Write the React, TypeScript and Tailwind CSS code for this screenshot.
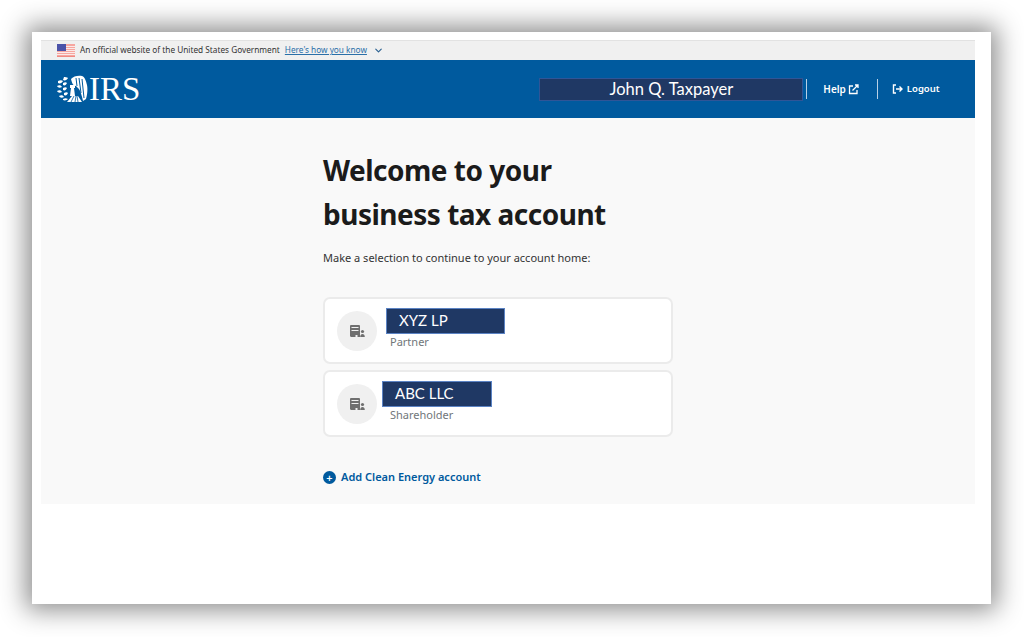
import { ChevronDown } from 'lucide-react';

// small US flag drawn by hand, the gov banner uses one
function Flag() {
  return (
    <svg width="18" height="13" viewBox="0 0 18 13" className="shrink-0">
      <rect width="18" height="13" fill="#f6a6a0" />
      <rect y="2" width="18" height="1" fill="#fbe9e7" />
      <rect y="4" width="18" height="1" fill="#fbe9e7" />
      <rect y="6" width="18" height="1" fill="#fbe9e7" />
      <rect y="8" width="18" height="1" fill="#fbe9e7" />
      <rect y="10" width="18" height="1" fill="#fbe9e7" />
      <rect y="12" width="18" height="1" fill="#f08a82" />
      <rect width="9" height="7" fill="#4a52a8" />
    </svg>
  );
}

function Emblem() {
  return (
    <svg width="31" height="28" viewBox="0 0 31 28" className="shrink-0" fill="#fff">
      {/* laurel */}
      <path d="M1 6c2-1 4-1 5 0-1 2-3 3-5 2zM0 11c2-1 4-1 5 1-2 1-4 1-5-1zM0 16c2-1 4-1 5 1-2 1-4 1-5-1zM2 21c2-1 4-1 5 1-2 1-4 1-5-1z" />
      <path d="M7 2c1 0 3 0 4 1-1 2-3 3-5 2zM6 8c2-1 3-1 4 0-1 2-2 3-4 2zM6 13c2-1 3-1 4 0-1 2-2 3-4 2zM7 18c2-1 3-1 4 0-1 2-2 3-4 2zM6 24c2-1 3-1 5 0-1 1-3 2-5 1z" />
      {/* eagle */}
      <path d="M14 4c2-3 8-4 11-3 3 1 4 5 5 9 1 5 0 11-1 14l-3 2c-1-4-2-9-4-12l-3-3c-3 0-4-3-5-7z" />
      <path d="M19 3l1 8M22 3l2 15M25 4l2 19" stroke="#005a9e" strokeWidth="1" fill="none" />
      {/* shield */}
      <path d="M13 10h5v3h-1l1 8h-5l1-8h-1z" />
      {/* base */}
      <path d="M10 27l5-6h6l4 6z" />
      <path d="M14 27l3-6M18 27l1-6M21 27l-1-6" stroke="#005a9e" strokeWidth=".8" fill="none" />
    </svg>
  );
}

function BuildingUser() {
  return (
    <svg width="15" height="12" viewBox="0 0 15 12" fill="#6f6f6f">
      <path d="M0 1.200C0 .5.500 0 1.200 0h7.600C9.500 0 10 .5 10 1.200V12H7.500v-2h-2v2H1.200C.5 12 0 11.500 0 10.800z" />
      <rect x="1.500" y="2" width="7" height="1" fill="#f0f0f0" />
      <rect x="1.500" y="5" width="7" height="1" fill="#f0f0f0" />
      <circle cx="12.500" cy="6.500" r="1.600" />
      <path d="M10.200 12c0-2 1-3 2.300-3s2.300 1 2.300 3z" />
    </svg>
  );
}

function AccountCard({ name, role, boxClass }: { name: string; role: string; boxClass: string }) {
  return (
    <div className="flex h-[67px] w-[350px] items-center rounded-[7px] border-2 border-[#ebebeb] bg-white pl-[12px]">
      <div className="flex h-[40px] w-[40px] shrink-0 items-center justify-center rounded-full bg-[#f0f0f0]">
        <BuildingUser />
      </div>
      <div className="flex flex-col pb-[4px]">
        <div className={`flex h-[26px] items-center border border-[#5b83c4] bg-[#1f3864] font-['Lato',sans-serif] text-[15px] text-white ${boxClass}`}>
          {name}
        </div>
        <div className="ml-[13px] text-[11px] leading-[16px] text-[#71767a]">{role}</div>
      </div>
    </div>
  );
}

export default function App() {
  return (
    <div className="h-[637px] w-[1024px] overflow-hidden bg-white pl-[32px] pt-[32px] font-['Noto_Sans',sans-serif]">
      <div className="h-[572px] w-[959px] bg-white pl-[9px] pr-[16px] pt-[8px] shadow-[0_0_24px_6px_rgba(0,0,0,0.45)]">
        <div className="flex h-[20px] items-center border-t border-[#e2e2e2] bg-[#f0f0f0] pl-[16px] text-[8.250px] text-[#333]">
          <Flag />
          <span className="ml-[5px] whitespace-nowrap">An official website of the United States Government</span>
          <span className="ml-[5px] whitespace-nowrap text-[#2a6fa8] underline">Here's how you know</span>
          <ChevronDown size={11} strokeWidth={2.5} className="ml-[6px] text-[#2a6090]" />
        </div>

        <div className="flex h-[58px] items-center bg-[#005a9e] pl-[16px] text-white">
          <Emblem />
          <span className="ml-[1px] font-['Liberation_Serif',serif] text-[33px] leading-none">IRS</span>
          <div className="ml-[399px] flex h-[23px] w-[264px] items-center justify-center border border-[#2f5597] bg-[#1f3864] font-['Lato',sans-serif] text-[16.500px]">
            John Q. Taxpayer
          </div>
          <div className="ml-[3px] h-[20px] w-px bg-[#b8d0e6]" />
          <span className="ml-[16px] text-[10px] font-semibold">Help</span>
          <svg width="11" height="11" viewBox="0 0 11 11" fill="none" stroke="#fff" strokeWidth="1.300" className="ml-[2px]">
            <path d="M5 2H1.500v7.500H9V6M4.500 6.500L10 1M7 1h3v3" />
          </svg>
          <div className="ml-[18px] h-[20px] w-px bg-[#b8d0e6]" />
          <svg width="11" height="10" viewBox="0 0 11 10" fill="none" stroke="#fff" strokeWidth="1.400" className="ml-[14px]">
            <path d="M4 1H1.500v8H4M4 5h6M7.500 2.500L10 5 7.500 7.500" />
          </svg>
          <span className="ml-[4px] text-[9.500px] font-semibold">Logout</span>
        </div>

        <div className="flex h-[386px] flex-col bg-[#f9f9f9] pl-[282px]">
          <h1 className="mt-[30px] text-[28px] font-bold leading-[44px] tracking-[-0.5px] text-[#1b1b1b]">
            Welcome to your
            <br />
            business tax account
          </h1>
          <p className="mt-[14px] text-[11px] leading-[16px] text-[#333]">Make a selection to continue to your account home:</p>
          <div className="mt-[31px] flex flex-col gap-[6px]">
            <AccountCard name="XYZ LP" role="Partner" boxClass="w-[119px] ml-[9px] pl-[12px]" />
            <AccountCard name="ABC LLC" role="Shareholder" boxClass="w-[110px] ml-[5px] pl-[12px]" />
          </div>
          <div className="mt-[32px] flex items-center gap-[5px] text-[11px] font-semibold text-[#005a9e]">
            <span className="flex h-[13px] w-[13px] items-center justify-center rounded-full bg-[#005a9e] text-[11px] leading-none text-white">+</span>
            Add Clean Energy account
          </div>
        </div>
      </div>
    </div>
  );
}
